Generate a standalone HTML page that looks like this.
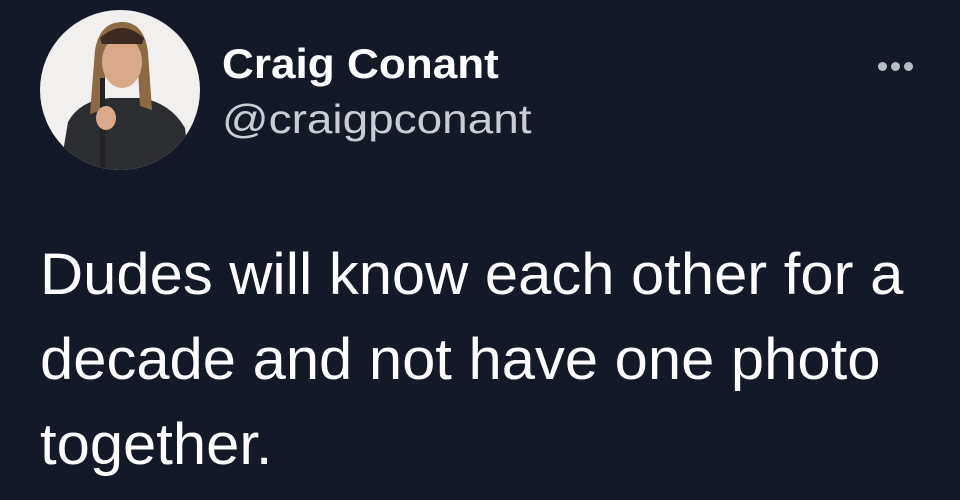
<!DOCTYPE html>
<html><head><style>
body{margin:0;width:960px;height:500px;background:#141927;overflow:hidden;font-family:"Liberation Sans",Arial,sans-serif;position:relative}
.av{position:absolute;left:40px;top:10px;width:160px;height:160px;border-radius:50%;background:#f1f0ee;overflow:hidden}
.name{position:absolute;left:222px;top:40px;color:#fff;font-weight:bold;font-size:42px;line-height:48px;transform-origin:0 0;transform:scaleX(1.05)}
.handle{position:absolute;left:222px;top:95px;color:#c9ccd3;font-size:41px;line-height:48px;transform-origin:0 0;transform:scaleX(1.12)}
.dots{position:absolute;left:878px;top:58px}
.dots i{display:inline-block;width:9px;height:9px;border-radius:50%;background:#b8bcc6;margin-right:4px}
.body{position:absolute;left:40px;top:232px;color:#fff;font-size:58px;line-height:85px;width:900px;white-space:nowrap;transform-origin:0 0;transform:scaleX(1.03)}
</style></head><body>
<div class="av">
<svg width="160" height="160" viewBox="0 0 160 160">
<path d="M20 160 L28 112 Q40 90 70 88 L100 88 Q130 92 145 118 L150 160Z" fill="#2c2d30"/>
<path d="M55 40 Q60 12 82 12 Q104 12 108 42 L112 100 L100 96 L98 60 L66 60 L62 100 L50 104Z" fill="#8b6a45"/>
<ellipse cx="82" cy="52" rx="20" ry="26" fill="#d9a98a"/>
<path d="M60 28 Q82 8 104 28 L102 34 L62 34Z" fill="#3a2a22"/>
<rect x="60" y="68" width="5" height="90" fill="#222"/>
<ellipse cx="66" cy="108" rx="10" ry="12" fill="#d9a98a"/>
</svg>
</div>
<div class="name">Craig Conant</div>
<div class="handle">@craigpconant</div>
<div class="dots"><i></i><i></i><i></i></div>
<div class="body">Dudes will know each other for a<br>decade and not have one photo<br>together.</div>
</body></html>
